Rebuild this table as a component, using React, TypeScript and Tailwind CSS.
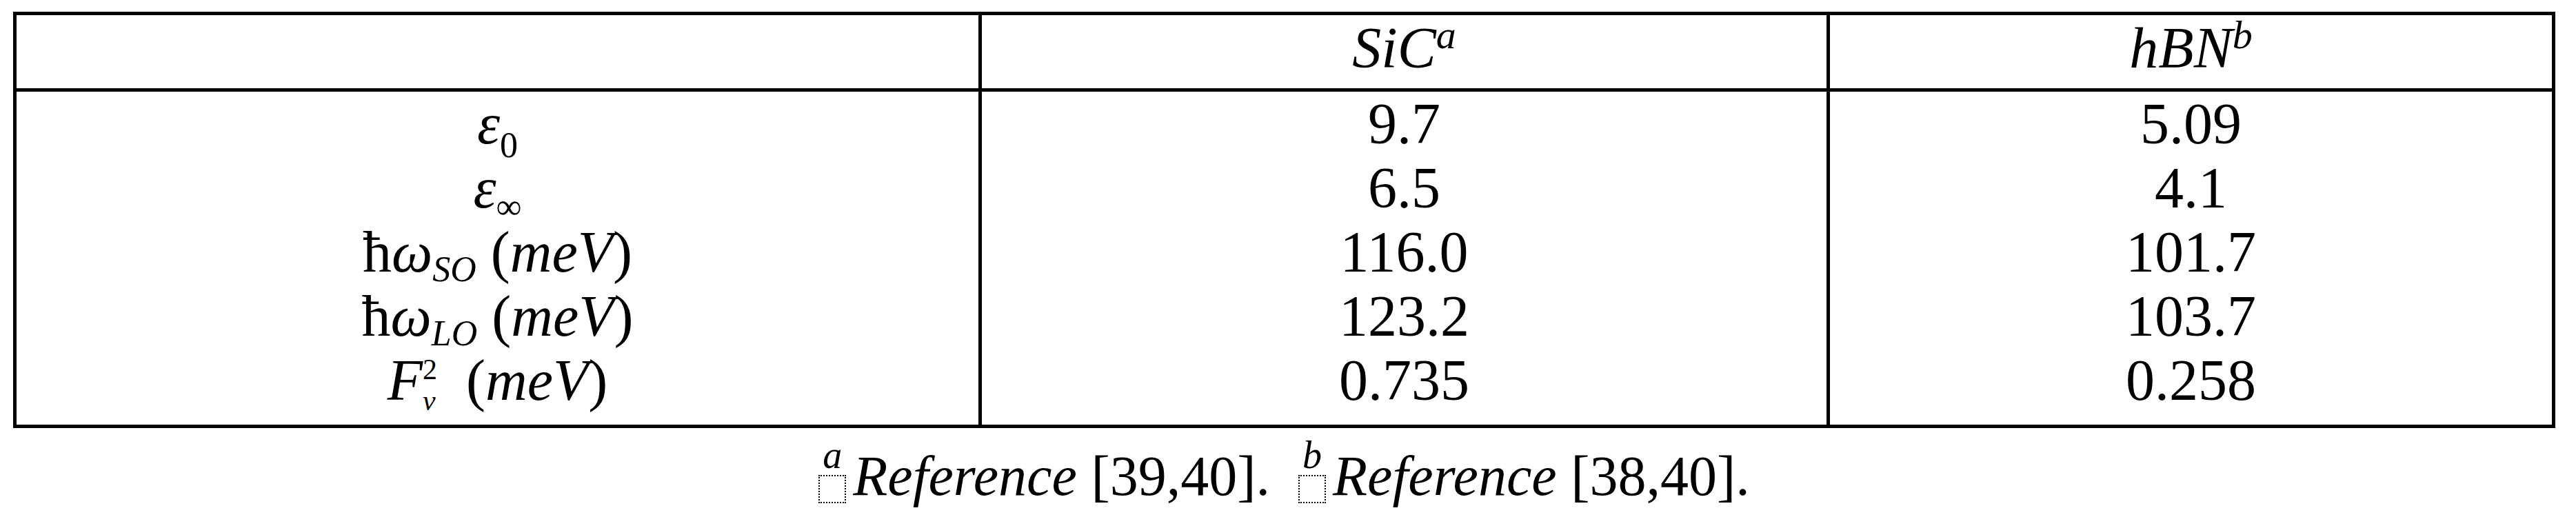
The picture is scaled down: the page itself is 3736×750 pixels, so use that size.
import React from 'react';

const serif = "font-['Liberation_Serif',serif]";

const Sub: React.FC<{ children: React.ReactNode; italic?: boolean; drop?: string }> = ({ children, italic, drop = 'align-[-18px]' }) => (
  <span className={`text-[52px] leading-[40px] ${drop} ${italic ? 'italic' : ''}`}>{children}</span>
);

const Sup: React.FC<{ children: React.ReactNode }> = ({ children }) => (
  <span className="text-[58px] leading-none italic align-[28px]">{children}</span>
);

const Meter: React.FC = () => (
  <>
    {' ('}
    <i>meV</i>
    {')'}
  </>
);

const rows: { label: React.ReactNode; sic: string; hbn: string }[] = [
  {
    label: (
      <>
        <i>ε</i>
        <Sub drop="align-[-20px]">0</Sub>
      </>
    ),
    sic: '9.7',
    hbn: '5.09',
  },
  {
    label: (
      <>
        <i>ε</i>
        <Sub drop="align-[-16px]">∞</Sub>
      </>
    ),
    sic: '6.5',
    hbn: '4.1',
  },
  {
    label: (
      <>
        ħ<i>ω</i>
        <Sub italic drop="align-[-14px]">SO</Sub>
        <Meter />
      </>
    ),
    sic: '116.0',
    hbn: '101.7',
  },
  {
    label: (
      <>
        ħ<i>ω</i>
        <Sub italic drop="align-[-14px]">LO</Sub>
        <Meter />
      </>
    ),
    sic: '123.2',
    hbn: '103.7',
  },
  {
    label: (
      <>
        <i>F</i>
        <span className="inline-flex flex-col items-start gap-[5px] text-[42px] leading-[40px] align-[30px]">
          <span>2</span>
          <span className="italic">v</span>
        </span>
        {'  ('}
        <i>meV</i>
        {')'}
      </>
    ),
    sic: '0.735',
    hbn: '0.258',
  },
];

const Marker: React.FC<{ letter: string }> = ({ letter }) => (
  <span className="inline-flex flex-col items-center align-[39px] mr-[10px]">
    <span className="text-[56px] leading-[46px] italic">{letter}</span>
    <span className="mt-[6px] block h-[41px] w-[40px] border-2 border-dotted border-black" />
  </span>
);

const Cell: React.FC<{ className: string; children: React.ReactNode }> = ({ className, children }) => (
  <div className={`${className} flex flex-col`}>{children}</div>
);

export default function App() {
  return (
    <div className={`min-h-[750px] bg-white text-black text-[84px] ${serif}`}>
      <div className="pl-[19px] pt-[17px] w-[3706px]">
        <div className="border-[5px] border-black">
          <div className="flex h-[111px] border-b-[5px] border-black">
            <div className="w-[1400px] border-r-[5px] border-black" />
            <div className="w-[1230px] border-r-[5px] border-black text-center leading-[93px] whitespace-pre">
              <i>SiC</i>
              <Sup>a</Sup>
            </div>
            <div className="flex-1 text-center leading-[93px] whitespace-pre">
              <i>hBN</i>
              <Sup>b</Sup>
            </div>
          </div>
          <div className="flex h-[483px]">
            <Cell className="w-[1400px] border-r-[5px] border-black">
              {rows.map((r, i) => (
                <div key={i} className="h-[93px] leading-[93px] text-center whitespace-pre">
                  {r.label}
                </div>
              ))}
            </Cell>
            <Cell className="w-[1230px] border-r-[5px] border-black">
              {rows.map((r, i) => (
                <div key={i} className="h-[93px] leading-[93px] text-center">
                  {r.sic}
                </div>
              ))}
            </Cell>
            <Cell className="flex-1">
              {rows.map((r, i) => (
                <div key={i} className="h-[93px] leading-[93px] text-center">
                  {r.hbn}
                </div>
              ))}
            </Cell>
          </div>
        </div>
        <p className="mt-[16px] h-[93px] leading-[93px] text-center whitespace-pre text-[82px]">
          <Marker letter="a" />
          <i>Reference</i>
          {' [39,40].  '}
          <Marker letter="b" />
          <i>Reference</i>
          {' [38,40].'}
        </p>
      </div>
    </div>
  );
}
